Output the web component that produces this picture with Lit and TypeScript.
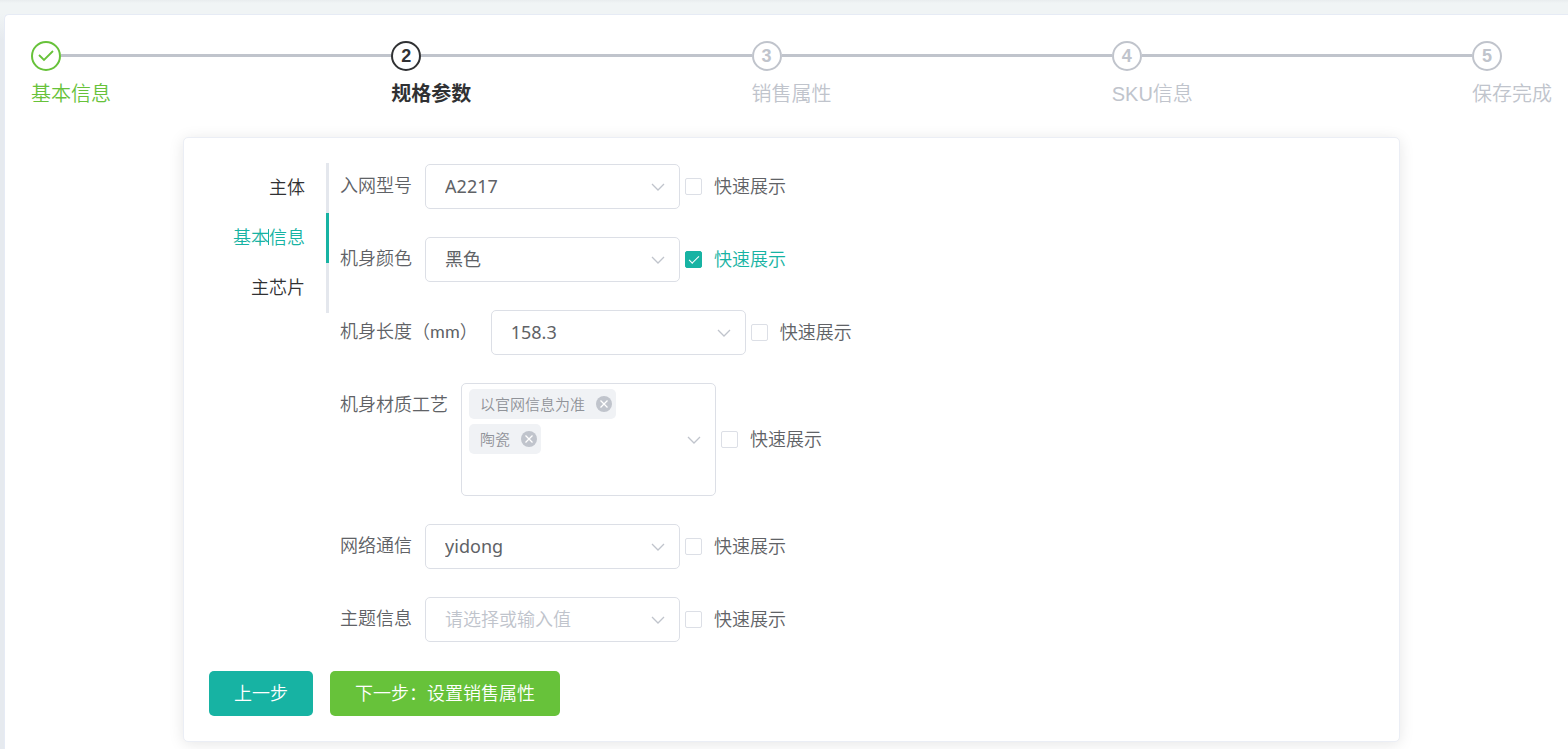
import { LitElement, html, css, nothing } from "lit";
import { customElement, property, state } from "lit/decorators.js";
import { classMap } from "lit/directives/class-map.js";

const chevron = html`<svg class="chevron" viewBox="0 0 14 8" aria-hidden="true">
  <path d="M1 1 L7 7 L13 1" fill="none" stroke="#c0c4cc" stroke-width="1.3" />
</svg>`;

interface Attr {
  id: string;
  label: string;
  unit?: string;
  value?: string;
  tags?: string[];
  quick?: boolean;
}

@customElement("step-bar")
export class StepBar extends LitElement {
  @property({ type: Array }) steps: string[] = [];
  @property({ type: Number }) active = 0;

  static styles = css`
    :host {
      display: block;
    }
    .steps {
      display: flex;
      margin: 0;
      padding: 0;
      list-style: none;
    }
    .step {
      flex: 1;
      color: #c0c4cc;
    }
    .step:last-child {
      flex: none;
    }
    .head {
      display: flex;
      align-items: center;
    }
    .icon {
      box-sizing: border-box;
      display: flex;
      justify-content: center;
      align-items: center;
      width: 30px;
      height: 30px;
      border: 2px solid currentColor;
      border-radius: 50%;
      font: bold 18px/26px "Liberation Sans", sans-serif;
    }
    .check {
      width: 16px;
      height: 12px;
    }
    .line {
      flex: 1;
      height: 3px;
      margin-bottom: 1px;
      background: #c0c4cc;
    }
    .title {
      font-size: 20px;
      line-height: 46px;
      white-space: nowrap;
    }
    .done {
      color: #67c23a;
    }
    .current {
      color: #303133;
    }
    .current .title {
      font-weight: bold;
    }
  `;

  render() {
    return html`<ol class="steps">
      ${this.steps.map((title, i) => {
        const done = i < this.active;
        const current = i === this.active;
        return html`<li class=${classMap({ step: true, done, current })}>
          <div class="head">
            <span class="icon">
              ${done
                ? html`<svg class="check" viewBox="0 0 16 12">
                    <path d="M1 5 L6 10 L15 1" fill="none" stroke="currentColor" stroke-width="1.8" />
                  </svg>`
                : i + 1}
            </span>
            ${i < this.steps.length - 1 ? html`<span class="line"></span>` : nothing}
          </div>
          <div class="title">${title}</div>
        </li>`;
      })}
    </ol>`;
  }
}

@customElement("attr-row")
export class AttrRow extends LitElement {
  @property({ attribute: false }) attr!: Attr;

  static styles = css`
    :host {
      display: block;
    }
    .row {
      display: flex;
      align-items: center;
    }
    .name {
      align-self: flex-start;
      padding-right: 13px;
      font-family: Lato, "Noto Sans CJK SC", sans-serif;
      line-height: 43px;
      white-space: nowrap;
    }
    .unit {
      font-weight: 400;
    }
    .box {
      display: grid;
      grid-template-columns: 100%;
      width: 255px;
      margin-right: 5px;
    }
    .control,
    .chevron {
      grid-area: 1 / 1;
    }
    .chevron {
      align-self: center;
      justify-self: end;
      width: 14px;
      height: 8px;
      margin-right: 15px;
      pointer-events: none;
    }
    .control {
      box-sizing: border-box;
      border: 1px solid #dcdfe6;
      border-radius: 5px;
      background: #fff;
      color: inherit;
      font: inherit;
    }
    .select {
      width: 100%;
      height: 45px;
      padding: 0 40px 2px 19px;
      appearance: none;
      outline: none;
      font-weight: 400;
    }
    .empty {
      color: #c0c4cc;
      font-weight: inherit;
    }
    .multi {
      display: flex;
      flex-wrap: wrap;
      align-content: flex-start;
      gap: 5px;
      height: 113px;
      padding: 5px 40px 5px 7px;
    }
    .tag {
      box-sizing: border-box;
      display: flex;
      align-items: center;
      gap: 11px;
      height: 30px;
      padding: 0 4px 0 11px;
      border-radius: 5px;
      background: #f0f2f5;
      color: #909399;
      font-size: 15px;
      line-height: 30px;
    }
    .close {
      display: block;
      width: 16px;
      height: 16px;
      padding: 0;
      border: 0;
      background: none;
    }
    .close-icon {
      display: block;
      width: 16px;
      height: 16px;
    }
    .entry {
      flex: 1 0 100%;
      box-sizing: border-box;
      min-width: 0;
      height: 30px;
      padding: 0 11px;
      border: 0;
      outline: none;
      background: none;
      font: inherit;
    }
    .quick {
      display: flex;
      align-items: center;
      gap: 12px;
      line-height: 45px;
      white-space: nowrap;
    }
    .tick {
      box-sizing: border-box;
      display: grid;
      place-items: center;
      width: 17px;
      height: 17px;
      margin: 0;
      border: 1px solid #dcdfe6;
      border-radius: 2px;
      background: #fff;
      appearance: none;
    }
    .tick:checked {
      border-color: #17b3a3;
      background: #17b3a3;
    }
    .tick:checked::before {
      content: "";
      width: 9px;
      height: 4px;
      margin-bottom: 3px;
      border: solid #fff;
      border-width: 0 0 1px 1px;
      transform: rotate(-45deg);
    }
    .quick:has(.tick:checked) {
      color: #17b3a3;
    }
  `;

  private renderControl() {
    const a = this.attr;
    if (a.tags) {
      return html`<div class="control multi">
        ${a.tags.map(
          (t) => html`<span class="tag"
            >${t}<button class="close" type="button" aria-label="移除">
              <svg class="close-icon" viewBox="0 0 16 16">
                <circle cx="8" cy="8" r="8" fill="#c0c4cc" />
                <path d="M4.5 4.5 L11.5 11.5 M11.5 4.5 L4.5 11.5" stroke="#fff" stroke-width="1.3" />
              </svg></button
          ></span>`
        )}
        <input class="entry" id=${a.id} type="text" />
      </div>`;
    }
    return html`<select id=${a.id} class=${classMap({ control: true, select: true, empty: !a.value })}>
      <option>${a.value ?? "请选择或输入值"}</option>
    </select>`;
  }

  render() {
    const a = this.attr;
    return html`<div class="row">
      <label class="name" for=${a.id}
        >${a.label}${a.unit ? html`（<span class="unit">${a.unit}</span>）` : nothing}</label
      >
      <div class="box">${this.renderControl()}${chevron}</div>
      <label class="quick"><input class="tick" type="checkbox" .checked=${!!a.quick} />快速展示</label>
    </div>`;
  }
}

@customElement("app-root")
export class AppRoot extends LitElement {
  @state() private tab = 1;

  private steps = ["基本信息", "规格参数", "销售属性", "SKU信息", "保存完成"];
  private tabs = ["主体", "基本信息", "主芯片"];
  private attrs: Attr[] = [
    { id: "model", label: "入网型号", value: "A2217" },
    { id: "color", label: "机身颜色", value: "黑色", quick: true },
    { id: "length", label: "机身长度", unit: "mm", value: "158.3" },
    { id: "material", label: "机身材质工艺", tags: ["以官网信息为准", "陶瓷"] },
    { id: "network", label: "网络通信", value: "yidong" },
    { id: "theme", label: "主题信息" },
  ];

  static styles = css`
    :host {
      box-sizing: border-box;
      display: flex;
      flex-direction: column;
      min-height: 100vh;
      padding: 14px 0 0 4px;
      background: linear-gradient(#e8ecee, #f0f4f5 3px, #f0f4f5 14px, #e6eaef 40px);
      color: #606266;
      font-family: "Noto Sans", "Noto Sans CJK SC", sans-serif;
      font-size: 18px;
      font-weight: 350;
    }
    .page {
      flex: 1;
      padding: 26px 16px 0 26px;
      border: solid #e6ebf5;
      border-width: 1px 0 0 1px;
      border-radius: 5px 0 0 0;
      background: #fff;
    }
    .steps {
      font-family: "Liberation Sans", "Noto Sans CJK SC", sans-serif;
    }
    .panel {
      box-sizing: border-box;
      width: 80%;
      margin: 20px auto 0;
      padding: 25px;
      border: 1px solid #ebeef5;
      border-radius: 5px;
      background: #fff;
      box-shadow: 0 2px 15px rgba(0, 0, 0, 0.1);
    }
    .body {
      display: flex;
      align-items: flex-start;
      gap: 11px;
    }
    .tabs {
      display: flex;
      flex-direction: column;
      width: 120px;
    }
    .tab {
      height: 50px;
      padding: 0 21px 4px 0;
      border: 0;
      border-right: 3px solid #e4e7ed;
      background: none;
      color: #303133;
      font: inherit;
      text-align: right;
    }
    .tab.on {
      border-color: #17b3a3;
      color: #17b3a3;
    }
    .caret {
      position: relative;
    }
    .caret::after {
      content: "";
      position: absolute;
      right: 0;
      top: 4px;
      bottom: 4px;
      width: 1px;
      background: #17b3a3;
    }
    .fields {
      display: grid;
      gap: 28px;
      flex: 1;
      padding-top: 1px;
    }
    .actions {
      display: flex;
      gap: 17px;
      margin-top: 29px;
    }
    .btn {
      height: 45px;
      padding: 0 25px 4px;
      border: 0;
      border-radius: 5px;
      background: #17b3a3;
      color: #fff;
      font: inherit;
    }
    .next {
      background: #67c23a;
    }
  `;

  private tabText(t: string, on: boolean) {
    return on ? html`<span class="caret">${t.slice(0, 2)}</span>${t.slice(2)}` : t;
  }

  render() {
    return html`<main class="page">
      <step-bar class="steps" .steps=${this.steps} .active=${1}></step-bar>
      <section class="panel">
        <div class="body">
          <div class="tabs" role="tablist">
            ${this.tabs.map(
              (t, i) => html`<button
                class=${classMap({ tab: true, on: i === this.tab })}
                type="button"
                role="tab"
                aria-selected=${i === this.tab}
                @click=${() => (this.tab = i)}
              >${this.tabText(t, i === this.tab)}</button>`
            )}
          </div>
          <form class="fields">${this.attrs.map((a) => html`<attr-row .attr=${a}></attr-row>`)}</form>
        </div>
        <div class="actions">
          <button class="btn" type="button">上一步</button>
          <button class="btn next" type="button">下一步：设置销售属性</button>
        </div>
      </section>
    </main>`;
  }
}
